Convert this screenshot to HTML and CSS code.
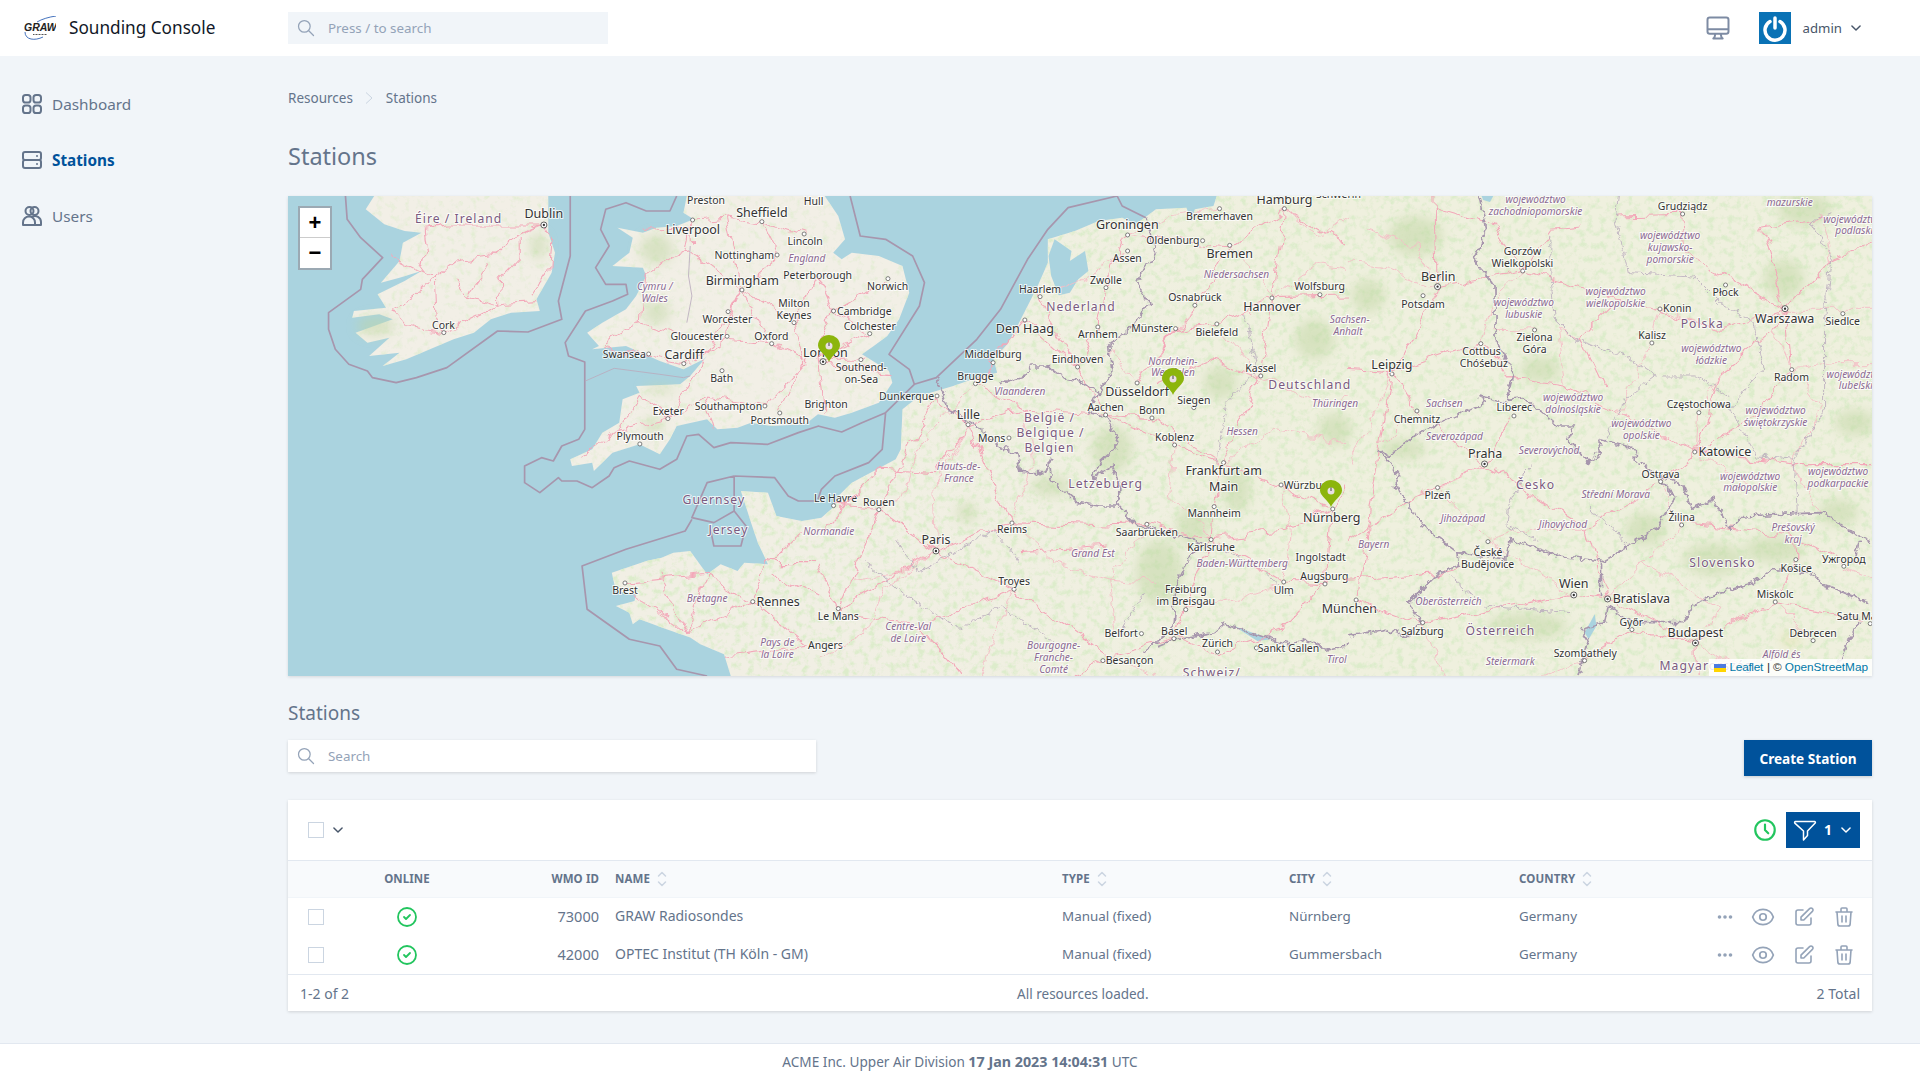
FILE: index.html
```html
<!DOCTYPE html>
<html lang="en">
<head>
<meta charset="utf-8">
<title>Sounding Console</title>
<link rel="stylesheet" href="styles.css">
</head>
<body>
<svg class="sprite" aria-hidden="true">
  <symbol id="i-search" viewBox="0 0 24 24"><path d="M21 21l-6-6m2-5a7 7 0 11-14 0 7 7 0 0114 0z"/></symbol>
  <symbol id="i-grid" viewBox="0 0 24 24"><rect x="3" y="3" width="7.500" height="7.500" rx="2.600"/><rect x="13.500" y="3" width="7.500" height="7.500" rx="2.600"/><rect x="3" y="13.500" width="7.500" height="7.500" rx="2.600"/><rect x="13.500" y="13.500" width="7.500" height="7.500" rx="2.600"/></symbol>
  <symbol id="i-server" viewBox="0 0 24 24"><path d="M5 12h14M5 12a2 2 0 01-2-2V6a2 2 0 012-2h14a2 2 0 012 2v4a2 2 0 01-2 2M5 12a2 2 0 00-2 2v4a2 2 0 002 2h14a2 2 0 002-2v-4a2 2 0 00-2-2m-2-4h.01M17 16h.01"/></symbol>
  <symbol id="i-users" viewBox="0 0 24 24"><circle cx="9.500" cy="7" r="4"/><circle cx="14.500" cy="7" r="4"/><path d="M3 21v-2.500a6 6 0 0112 0V21zM12 12.800a6 6 0 019 5.200V21h-6"/></symbol>
  <symbol id="i-desktop" viewBox="0 0 24 24"><path d="M9.750 17L9 20l-1 1h8l-1-1-.75-3M3 13h18M5 17h14a2 2 0 002-2V5a2 2 0 00-2-2H5a2 2 0 00-2 2v10a2 2 0 002 2z"/></symbol>
  <symbol id="i-down" viewBox="0 0 24 24"><path d="M5 8.500l7 7 7-7"/></symbol>
  <symbol id="i-check" viewBox="0 0 24 24"><path d="M9 12l2 2 4-4m6 2a9 9 0 11-18 0 9 9 0 0118 0z"/></symbol>
  <symbol id="i-clock" viewBox="0 0 24 24"><path d="M12 7v5l3 3m6-3a9 9 0 11-18 0 9 9 0 0118 0z"/></symbol>
  <symbol id="i-filter" viewBox="0 0 24 24"><path d="M2.500 3.500h19a1 1 0 01.7 1.600L14.500 13v4.500l-4 4.500V13L1.800 5.100a1 1 0 01.7-1.600z"/></symbol>
  <symbol id="i-sort" viewBox="0 0 12 20"><path d="M2.500 7L6 3.500 9.500 7M2.500 13L6 16.500 9.500 13"/></symbol>
  <symbol id="i-eye" viewBox="0 0 24 24"><path d="M15 12a3 3 0 11-6 0 3 3 0 016 0z"/><path d="M2.458 12C3.732 7.943 7.523 5 12 5c4.478 0 8.268 2.943 9.542 7-1.274 4.057-5.064 7-9.542 7-4.477 0-8.268-2.943-9.542-7z"/></symbol>
  <symbol id="i-edit" viewBox="0 0 24 24"><path d="M11 5H6a2 2 0 00-2 2v11a2 2 0 002 2h11a2 2 0 002-2v-5m-1.414-9.414a2 2 0 112.828 2.828L11.828 15H9v-2.828l8.586-8.586z"/></symbol>
  <symbol id="i-trash" viewBox="0 0 24 24"><path d="M19 7l-.867 12.142A2 2 0 0116.138 21H7.862a2 2 0 01-1.995-1.858L5 7m5 4v6m4-6v6m1-10V4a1 1 0 00-1-1h-4a1 1 0 00-1 1v3M4 7h16"/></symbol>
  <symbol id="i-dots" viewBox="0 0 16 6"><circle cx="2.500" cy="3" r="1.800"/><circle cx="8" cy="3" r="1.800"/><circle cx="13.500" cy="3" r="1.800"/></symbol>
</svg>

<header class="topbar">
  <div class="brand">
    <svg class="logo" viewBox="0 0 32 24">
      <path class="logo-arc" d="M13 6C18 3 25 1 32 0M1 16c0 8 10 9 18 5"/>
      <path class="logo-sub" d="M9 18.500h14"/>
      <text class="logo-text" x="0" y="15">GRAW</text>
    </svg>
    <span class="brand-name">Sounding Console</span>
  </div>
  <div class="searchbox top-search">
    <svg class="ico ico-search"><use href="#i-search"/></svg>
    <input class="search-input" placeholder="Press / to search">
  </div>
  <div class="top-right">
    <svg class="ico ico-desktop"><use href="#i-desktop"/></svg>
    <div class="avatar">
      <svg class="power" viewBox="0 0 32 32"><path d="M11 9.500a10 10 0 1010 0"/><path d="M16 6v10"/></svg>
    </div>
    <span class="user">admin</span>
    <svg class="ico ico-chev"><use href="#i-down"/></svg>
  </div>
</header>

<div class="shell">
  <nav class="sidebar">
    <a class="nav"><svg class="ico nav-ico"><use href="#i-grid"/></svg>Dashboard</a>
    <a class="nav active"><svg class="ico nav-ico"><use href="#i-server"/></svg>Stations</a>
    <a class="nav"><svg class="ico nav-ico"><use href="#i-users"/></svg>Users</a>
  </nav>

  <main class="main">
    <div class="crumbs">
      <span>Resources</span>
      <svg class="crumb-sep" viewBox="0 0 10 14"><path d="M2 1.500L8 7l-6 5.500"/></svg>
      <span>Stations</span>
    </div>
    <h1 class="page-title">Stations</h1>

    <section class="map">
      <svg class="map-svg" viewBox="0 0 1584 480">
        <defs>
          <linearGradient id="landwash" gradientUnits="userSpaceOnUse" x1="1600" y1="0" x2="3000" y2="0">
            <stop offset="0" stop-color="#f1efe4"/>
            <stop offset="1" stop-color="#eff0de"/>
          </linearGradient>
          <filter id="mottle" x="0" y="0" width="1" height="1">
            <feTurbulence type="fractalNoise" baseFrequency=".05" numOctaves="5" seed="7"/>
            <feColorMatrix values="0 0 0 0 .72  0 0 0 0 .84  0 0 0 0 .6  0 0 0 3.500 -1.650"/>
            <feComposite in2="SourceAlpha" operator="in" result="woods"/>
            <feMerge><feMergeNode in="SourceGraphic"/><feMergeNode in="woods"/></feMerge>
          </filter>
          <filter id="mottle-lt" x="0" y="0" width="1" height="1">
            <feTurbulence type="fractalNoise" baseFrequency=".05" numOctaves="5" seed="21"/>
            <feColorMatrix values="0 0 0 0 .74  0 0 0 0 .84  0 0 0 0 .62  0 0 0 2.500 -1.300"/>
            <feComposite in2="SourceAlpha" operator="in" result="woods"/>
            <feMerge><feMergeNode in="SourceGraphic"/><feMergeNode in="woods"/></feMerge>
          </filter>
          <filter id="soft" x="-50%" y="-50%" width="200%" height="200%"><feGaussianBlur stdDeviation="18"/></filter>
          <filter id="wiggle" filterUnits="userSpaceOnUse" x="-100" y="-100" width="3400" height="1700">
            <feTurbulence type="fractalNoise" baseFrequency=".018" numOctaves="3" seed="3"/>
            <feDisplacementMap in="SourceGraphic" scale="46" xChannelSelector="R" yChannelSelector="G"/>
          </filter>
          <filter id="jag" filterUnits="userSpaceOnUse" x="-100" y="-100" width="3400" height="1700">
            <feTurbulence type="fractalNoise" baseFrequency=".045" numOctaves="3" seed="11"/>
            <feDisplacementMap in="SourceGraphic" scale="26" xChannelSelector="R" yChannelSelector="G"/>
          </filter>
        </defs>
        <rect class="sea" width="1584" height="480"/>

        <g transform="scale(.338 .3333)">
          <path class="land land-isle" d="M255,0 230,40 285,85 345,105 395,110 340,140 330,195 275,260 330,245 395,225 345,255 265,295 290,335 195,345 190,365 270,355 310,370 200,410 235,440 300,425 240,480 330,470 280,510 350,490 490,430 550,410 600,370 660,350 745,345 735,310 780,230 790,170 770,110 770,0Z"/>
          <path class="land land-isle" d="M1180,0 1170,50 1200,70 1150,90 1090,95 1050,110 975,95 1020,125 1010,170 960,210 1050,215 1060,240 1030,300 1000,340 930,380 885,410 920,450 900,460 1000,450 1100,495 1170,520 1230,490 1240,480 1190,540 1160,565 1030,570 1040,590 990,610 980,680 930,710 900,760 835,790 840,810 900,800 905,825 960,770 1040,745 1100,775 1130,730 1150,690 1240,670 1270,700 1330,695 1370,680 1430,690 1530,685 1568,655 1618,665 1668,650 1748,620 1788,560 1778,525 1698,475 1733,450 1773,420 1808,370 1838,290 1818,210 1748,180 1668,170 1638,190 1613,170 1648,130 1628,60 1588,0Z"/>
          <path class="land land-main" d="M1310,1440 1290,1375 1220,1345 1190,1325 1120,1300 1040,1270 1020,1285 1010,1250 970,1230 1025,1215 1030,1195 970,1185 958,1130 1060,1095 1105,1085 1140,1070 1190,1065 1240,1135 1280,1105 1330,1125 1350,1100 1420,1105 1390,1040 1370,980 1340,885 1420,890 1445,960 1520,975 1578,965 1618,930 1628,900 1668,860 1798,790 1813,760 1818,640 1868,600 1968,570 2038,545 2098,530 2088,490 2128,445 2158,390 2188,330 2218,270 2248,200 2248,130 2328,105 2398,75 2468,65 2508,85 2568,40 2658,35 2673,75 2683,40 2738,30 2748,0H4800V1440Z"/>
          <g class="wood" filter="url(#soft)">
            <ellipse cx="1090" cy="160" rx="50" ry="45"/><ellipse cx="1090" cy="350" rx="40" ry="35"/><ellipse cx="740" cy="150" rx="25" ry="40"/><ellipse cx="260" cy="390" rx="55" ry="30"/><ellipse cx="1080" cy="690" rx="30" ry="24"/><ellipse cx="1100" cy="580" rx="50" ry="12"/>
          </g>
          <g class="rd" filter="url(#wiggle)">
            <path d="M400,100 410,170 395,230 430,250 500,195 600,180 640,140 755,90M430,250 435,360 460,410M530,300 600,200M470,90 410,95M630,330 625,250 690,180 690,125M720,300 775,220 780,140 755,90M315,340 430,250M310,340 350,390 460,410 640,325 740,320M400,100 470,90 755,90M300,180 395,230M490,250 530,300 630,330"/>
            <path d="M1197,70 1300,60 1340,280 1430,440 1530,490M1340,280 1240,480 1170,500 930,450M1430,440 1300,430 1240,480 1125,665 980,700 860,790M1125,665 1240,600 1410,630 1540,490M1340,280 1500,380 1530,490M1300,60 1400,75 1525,115M1450,180 1340,280M1200,140 1195,70M1050,100 1200,95M1530,490 1455,650M1340,280 1310,350 1300,430M1180,160 1340,280M1060,230 1180,160M1045,380 1170,420M1060,230 1045,380M930,450 1045,380M1197,72 1180,160M1400,75 1450,180M1500,380 1568,240M980,700 1040,600 1125,665M1240,600 1270,700"/>
            <path d="M1000,1160 1240,1135 1375,1215M1010,1190 1180,1310 1375,1215 1420,1100 1570,1100M1375,1215 1530,1345 1290,1375M1440,1140 1560,1200M1520,1010 1430,1100M1100,1130 1180,1310M1240,1135 1180,1310"/>
          </g>
          <g class="bd">
            <path d="M170,0 175,70 215,125 280,185 220,250 215,280 120,350 120,400 140,460 180,505 235,525 250,545 320,560 380,545 470,515 620,405 710,408 810,370 800,315 835,180 835,0"/>
            <path d="M1150,0 1130,45 1060,45 1000,20 940,40 925,100 950,150 910,215 940,265 1000,265 1005,295 960,315 880,345 820,440 830,480 878,498 878,700 860,730 810,750 785,795 750,785 700,810 700,860 745,890 800,845 810,855 855,855 900,875 950,840 965,815 1010,795 1100,820 1150,790 1180,720 1215,715 1260,755 1310,740 1420,745 1510,710 1570,690"/>
            <path d="M1195,970 1175,1005 1000,1060 870,1110 885,1240 1010,1330 1100,1350 1150,1420 1240,1440M1320,840 1240,860 1195,965 1260,980 1320,945 1355,990 1340,1050 1260,1050 1250,1000M1320,840V945M1320,840 1440,845 1480,900 1510,915 1568,915"/>
            <path class="thin" d="M880,555 965,517 1100,535 1170,545 1190,540"/>
            <path class="thin" d="M1190,150 1185,240 1195,300 1180,380"/>
          </g>
          <g class="cities">
            <circle class="cap" cx="757" cy="87"/><circle class="cap-dot" cx="757" cy="87"/><circle cx="461" cy="410"/><circle cx="1197" cy="72"/><circle cx="1402" cy="77"/><circle cx="1343" cy="282"/><circle cx="1447" cy="177"/><circle cx="1527" cy="114"/><circle cx="1302" cy="347"/><circle cx="1299" cy="421"/><circle cx="1431" cy="443"/><circle cx="1067" cy="474"/><circle cx="1171" cy="503"/><circle cx="1284" cy="524"/><circle cx="1124" cy="668"/><circle cx="1041" cy="744"/><circle cx="1411" cy="630"/><circle cx="1455" cy="651"/><circle cx="1497" cy="380"/><circle cx="997" cy="1161"/><circle cx="1375" cy="1217"/>
          </g>
          <g class="lbl">
            <text class="n" x="505" y="82">Éire / Ireland</text><text class="b" x="757" y="67">Dublin</text><text x="460" y="400">Cork</text><text x="1237" y="24">Preston</text><text class="b" x="1402" y="62">Sheffield</text><text class="b" x="1198" y="115">Liverpool</text><text x="1350" y="188">Nottingham</text><text x="1530" y="146">Lincoln</text><text class="r" x="1535" y="197">England</text><text x="1555" y="27">Hull</text><text class="b" x="1344" y="267">Birmingham</text><text x="1567" y="250">Peterborough</text><text class="r" x="1085" y="283">Cymru /</text><text class="r" x="1085" y="318">Wales</text><text x="1497" y="333">Milton</text><text x="1497" y="369">Keynes</text><text x="1300" y="380">Worcester</text><text x="1210" y="431">Gloucester</text><text x="1430" y="432">Oxford</text><text class="b" x="1590" y="482">London</text><text x="995" y="485">Swansea</text><text class="b" x="1172" y="488">Cardiff</text><text x="1283" y="559">Bath</text><text x="1303" y="642">Southampton</text><text x="1592" y="636">Brighton</text><text x="1125" y="657">Exeter</text><text x="1455" y="685">Portsmouth</text><text x="1042" y="733">Plymouth</text><text class="n" x="1260" y="925">Guernsey</text><text class="n" x="1303" y="1015">Jersey</text><text x="997" y="1193">Brest</text><text class="r" x="1240" y="1217">Bretagne</text><text class="b" x="1450" y="1229">Rennes</text><text class="r" x="1448" y="1350">Pays de</text><text class="r" x="1448" y="1385">la Loire</text><text class="r" x="1600" y="1017">Normandie</text><text x="1590" y="1360">Angers</text><text x="1620" y="918">Le Havre</text>
          </g>
        </g>

        <g transform="translate(530 0) scale(.338 .3333)">
          <path class="sea" d="M700,130 750,165 745,195 790,165 800,225 770,250 745,290 712,298 690,240 682,180Z"/>
          <path class="sea" d="M1230,1290 1340,1330 1300,1335Z"/>
          <g class="wood" filter="url(#soft)">
            <ellipse cx="870" cy="760" rx="60" ry="70"/><ellipse cx="1010" cy="1130" rx="70" ry="100"/><ellipse cx="1110" cy="990" rx="50" ry="60"/><ellipse cx="690" cy="870" rx="60" ry="30"/><ellipse cx="1470" cy="430" rx="60" ry="60"/><ellipse cx="1240" cy="880" rx="40" ry="70"/><ellipse cx="1190" cy="560" rx="50" ry="50"/><ellipse cx="1530" cy="700" rx="50" ry="50"/><ellipse cx="440" cy="950" rx="30" ry="30"/>
          </g>
          <g class="rd" filter="url(#wiggle)">
            <path d="M0,490 130,490M0,480 45,345 205,250M45,345 150,410 0,480M0,480 20,650M15,500 220,530M46,345 0,240"/>
            <path d="M349,1065 180,940M349,1065 574,980M574,980 445,690M349,1065 60,1240M349,1065 580,1180 860,1380 1054,1330M574,980 860,990 973,985 1163,1030 1380,1155 1498,1160M445,690 350,600M445,690 610,640 851,655 988,665 1200,800 1170,930 1163,1030 1054,1320 1180,1370M851,655 768,510 650,300M768,510 612,370M944,560 1118,330 1218,150 1380,40M944,560 1060,400 1180,385 1343,305 1380,40M1343,305 1310,540 1200,800 1370,870 1520,940 1500,1160M851,655 1055,745 1200,800M916,118 850,275 828,395 768,510M916,118 1218,150M612,370 466,560 610,640M1500,1160 1370,1300 1180,1370M180,940 46,930M180,940 60,1240M60,1240 0,1100M1000,560 1160,490 1310,540M350,600 180,940M1163,1030 1380,1000 1520,940M600,1070 860,1050M20,1000 180,820 350,830 445,690M60,1240 300,1290 580,1180M300,1290 420,1440M860,1380 760,1440M1343,305 1568,300M1380,40 1568,150M1520,940 1568,870"/>
            <path class="mn" d="M650,300 780,250 916,165M1118,330 1058,398 944,560M1180,385 1310,540M1310,540 1480,620 1568,600M1055,745 1040,900 1163,1030M1200,800 1340,700 1568,740M1370,870 1400,1000 1380,1155M973,985 860,1150 880,1310M574,980 700,1100 860,1150 1000,1160M445,690 340,880 349,1065M349,1065 200,1180 150,1300 0,1380M580,1180 520,1300 480,1440M860,1380 1000,1440M1088,1241 1250,1200 1378,1158M1343,305 1480,200 1568,220M1218,150 1300,240 1343,305M768,510 870,470 944,560M466,563 300,740 250,900 180,940M610,640 640,800 574,980M100,1150 250,1130 349,1065M1380,40 1490,120 1568,60M916,118 1040,60 1188,38"/>
          </g>
          <g class="bd" filter="url(#jag)">
            <path d="M350,545 385,640 470,690 530,750 590,770 600,830 670,830 685,790 690,850 770,920 830,930 890,930 940,985 1060,1020 1140,1040 1090,1100 1060,1160 1050,1300 1000,1340 960,1370M1000,1350 1050,1330 1170,1310 1200,1285 1340,1330 1400,1345 1440,1330 1500,1360 1568,1350"/>
            <path d="M540,560 610,540 630,510 680,510 730,545 790,560 830,590 800,650 850,660 880,720 890,745 840,790 810,850 870,810 890,860 890,930M970,65 1000,170 940,260 980,320 940,380 890,425 860,450 870,530 830,590"/>
            <path class="thin" d="M1140,1040 1300,1110 1400,1200M1260,350 1300,520 1210,620 1180,800M230,1030 300,1130 520,1000 600,1100M140,1100 260,1200 420,1300 540,1230 700,1340M960,1200 900,1300"/>
          </g>
          <g class="bd">
            <path d="M95,0 125,120 200,130 280,180 315,260 300,330 210,475 270,520 285,565 200,650 190,760 150,800 50,840 10,880 0,910M0,690 70,708 130,680 200,650M285,565 350,545 470,430 540,340 620,190 680,100 740,35 885,0 900,30 970,65"/>
          </g>
          <g class="cities">
            <circle class="cap" cx="15" cy="497"/><circle class="cap-dot" cx="15" cy="497"/><circle cx="127" cy="491"/><circle cx="46" cy="345"/><circle cx="207" cy="248"/><circle cx="153" cy="413"/><circle cx="352" cy="600"/><circle cx="466" cy="563"/><circle cx="444" cy="686"/><circle cx="565" cy="726"/><circle cx="518" cy="500"/><circle cx="612" cy="372"/><circle cx="657" cy="302"/><circle cx="768" cy="513"/><circle cx="828" cy="393"/><circle cx="852" cy="275"/><circle cx="916" cy="165"/><circle cx="916" cy="117"/><circle cx="1138" cy="134"/><circle cx="1218" cy="148"/><circle cx="1380" cy="38"/><circle cx="1188" cy="38"/><circle cx="1115" cy="328"/><circle cx="1058" cy="398"/><circle cx="1180" cy="384"/><circle cx="1343" cy="306"/><circle cx="1485" cy="296"/><circle cx="944" cy="561"/><circle cx="1310" cy="540"/><circle cx="851" cy="657"/><circle cx="988" cy="666"/><circle cx="1112" cy="635"/><circle cx="1055" cy="747"/><circle cx="1200" cy="800"/><circle cx="1370" cy="867"/><circle cx="1523" cy="939"/><circle cx="1172" cy="932"/><circle cx="1163" cy="1031"/><circle cx="973" cy="985"/><circle cx="574" cy="981"/><circle class="cap" cx="349" cy="1065"/><circle class="cap-dot" cx="349" cy="1065"/><circle cx="180" cy="941"/><circle cx="46" cy="929"/><circle cx="580" cy="1180"/><circle cx="60" cy="1238"/><circle cx="1378" cy="1158"/><circle cx="1500" cy="1164"/><circle cx="1088" cy="1241"/><circle cx="1053" cy="1328"/><circle cx="957" cy="1313"/><circle cx="843" cy="1394"/><circle cx="1182" cy="1368"/><circle cx="1297" cy="1356"/>
          </g>
          <g class="lbl">
            <text class="b" x="1380" y="24">Hamburg</text><text x="1540" y="5">Schwerin</text><text x="1188" y="72">Bremerhaven</text><text class="b" x="915" y="98">Groningen</text><text x="1050" y="144">Oldenburg</text><text class="b" x="1218" y="187">Bremen</text><text x="915" y="199">Assen</text><text class="r" x="1238" y="247">Niedersachsen</text><text x="852" y="263">Zwolle</text><text x="1484" y="283">Wolfsburg</text><text x="657" y="291">Haarlem</text><text x="1115" y="316">Osnabrück</text><text class="b" x="1343" y="345">Hannover</text><text class="n" x="778" y="346">Nederland</text><text x="137" y="356">Cambridge</text><text x="206" y="281">Norwich</text><text x="153" y="402">Colchester</text><text class="b" x="612" y="412">Den Haag</text><text x="828" y="426">Arnhem</text><text x="988" y="409">Münster</text><text x="1180" y="420">Bielefeld</text><text x="518" y="487">Middelburg</text><text x="768" y="500">Eindhoven</text><text class="r" x="1050" y="506">Nordrhein-</text><text class="r" x="1050" y="541">Westfalen</text><text x="1310" y="527">Kassel</text><text x="128" y="526">Southend-</text><text x="128" y="562">on-Sea</text><text x="466" y="551">Brugge</text><text class="n" x="1455" y="580">Deutschland</text><text class="r" x="597" y="598">Vlaanderen</text><text class="b" x="944" y="600">Düsseldorf</text><text x="262" y="613">Dunkerque</text><text x="1112" y="623">Siegen</text><text class="r" x="1530" y="633">Thüringen</text><text x="851" y="644">Aachen</text><text x="988" y="654">Bonn</text><text class="n" x="685" y="678">België /</text><text class="b" x="445" y="670">Lille</text><text class="n" x="688" y="724">Belgique /</text><text x="514" y="737">Mons</text><text x="1055" y="735">Koblenz</text><text class="r" x="1255" y="718">Hessen</text><text class="n" x="685" y="769">Belgien</text><text class="r" x="416" y="822">Hauts-de-</text><text class="r" x="417" y="857">France</text><text class="b" x="1200" y="838">Frankfurt am</text><text class="b" x="1200" y="885">Main</text><text class="n" x="851" y="875">Letzebuerg</text><text x="1450" y="878">Würzburg</text><text x="180" y="929">Rouen</text><text x="1172" y="964">Mannheim</text><text class="b" x="1520" y="979">Nürnberg</text><text x="574" y="1012">Reims</text><text x="973" y="1020">Saarbrücken</text><text x="1163" y="1065">Karlsruhe</text><text class="b" x="349" y="1044">Paris</text><text class="r" x="813" y="1083">Grand Est</text><text class="r" x="1255" y="1112">Baden-Württemberg</text><text x="1487" y="1094">Ingolstadt</text><text x="1498" y="1152">Augsburg</text><text x="580" y="1167">Troyes</text><text x="1088" y="1192">Freiburg</text><text x="1088" y="1228">im Breisgau</text><text x="1378" y="1193">Ulm</text><text x="60" y="1271">Le Mans</text><text class="b" x="1572" y="1252">München</text><text class="r" x="267" y="1302">Centre-Val</text><text class="r" x="267" y="1337">de Loire</text><text x="897" y="1323">Belfort</text><text x="1054" y="1316">Basel</text><text x="1182" y="1354">Zürich</text><text x="1392" y="1367">Sankt Gallen</text><text class="r" x="697" y="1360">Bourgogne-</text><text class="r" x="697" y="1395">Franche-</text><text class="r" x="697" y="1430">Comté</text><text x="922" y="1405">Besançon</text><text class="n" x="1165" y="1442">Schweiz/</text><text class="r" x="1535" y="1400">Tirol</text>
          </g>
        </g>

        <g transform="translate(1060 0) scale(.338 .3333)">
          <g class="wood" filter="url(#soft)">
            <ellipse cx="200" cy="120" rx="80" ry="60"/><ellipse cx="60" cy="300" rx="50" ry="50"/><ellipse cx="570" cy="520" rx="60" ry="40"/><ellipse cx="1350" cy="40" rx="80" ry="50"/><ellipse cx="1080" cy="1090" rx="90" ry="50"/><ellipse cx="1260" cy="1060" rx="90" ry="40"/><ellipse cx="530" cy="1290" rx="120" ry="40"/><ellipse cx="160" cy="760" rx="70" ry="30"/><ellipse cx="1450" cy="950" rx="60" ry="40"/><ellipse cx="1500" cy="680" rx="60" ry="40"/><ellipse cx="1290" cy="250" rx="60" ry="60"/><ellipse cx="880" cy="1000" rx="60" ry="50"/>
            <ellipse class="dry" cx="1310" cy="1330" rx="30" ry="25"/>
          </g>
          <path class="sea" d="M700,1310 730,1255 735,1290 712,1330Z"/>
          <path class="sea" d="M395,0H430L420,18 400,12Z"/>
          <g class="rd" filter="url(#wiggle)">
            <path d="M267,275 520,225 800,310 1100,400 1293,340M267,275 130,530 30,1200M130,530 394,440 500,550 640,570 800,650 1030,770 1100,540 1260,400 1293,340M405,805 490,660M405,805 200,900 0,1040M405,805 710,1000 770,1210 668,1195 220,1280 30,1210M770,1210 1030,1340 1264,1220 1520,1270M1293,340 1430,190 1568,130M1030,770 1310,800 1568,800M925,860 1030,770M925,860 770,950 710,1000M985,985 1320,1020 1470,1100M1030,1340 840,1300M1290,340 1000,170 990,55M1290,340 1220,90 1400,60M267,275 260,0M520,225 600,100 700,90M130,530 0,520M130,530 200,650 405,805M520,225 430,90 260,40M1293,340 1310,520 1220,650 1030,770M990,55 800,60M1320,1020 1325,1090 1264,1220M1030,1340 1030,1440M700,1394 840,1300M0,1150 270,1130 330,1110M800,310 690,420 760,570"/>
            <path class="mn" d="M60,100 200,150 267,275M0,200 100,210 267,275M130,530 60,700 0,800M200,650 90,760M394,440 440,300 520,225M552,402 430,400M640,570 620,400 690,420M800,650 900,441 923,339 1100,400M1030,770 1038,650 1100,540M1313,521 1400,640 1310,800M1313,521 1260,400M1310,800 1400,950M1190,880 1030,770M265,875 405,805M265,875 414,1037 668,1197M414,1037 540,1000 710,1000M987,987 925,860M987,987 870,1100 770,1210M1030,1340 1100,1240 1000,1180 870,1100M1325,1091 1264,1218M1376,1334 1264,1218M1568,500 1430,500 1313,521M1430,190 1400,60M1293,340 1568,340M700,1394 560,1440M220,1280 280,1440M1028,1341 1200,1440M1467,1111 1568,1150"/>
          </g>
          <g class="bd" filter="url(#jag)">
            <path d="M0,1320 110,1300 170,1320 215,1280 180,1220 270,1130 330,1110 325,1070 230,1000 140,870 150,840 90,760 120,780 210,710 340,650 400,620 390,600 440,610 470,620M390,0 410,100 370,190 435,270 435,430 490,530 470,610 520,605 620,690 670,690 650,730 710,800 750,770 740,730 850,760 850,790 900,830 990,870 1020,940 1080,910 1130,1000 1170,960 1400,950 1520,1025 1550,1040M900,830 970,900 910,1000 830,1050 750,1100 750,1200M325,1070 470,1090 480,1030 620,1080 750,1095M770,1230 760,1280 690,1300 710,1330 680,1440M770,1230 840,1280 990,1280 1030,1220 1100,1190 1200,1160 1250,1120 1370,1130 1400,1165 1540,1220M1510,1040 1500,1100M1510,1280 1450,1400"/>
            <path class="thin" d="M800,0 790,70 830,230 1020,240 1100,320 1200,380 1230,510 1130,640 1210,780 1320,790 1330,960M600,120 600,230 610,370 670,430 820,480 910,540 830,600 760,730M930,540 1030,540 1130,600M1430,50 1370,80 1430,180 1410,370 1410,640 1320,790M720,880 720,950 760,970 830,1050M300,1140 400,1230 660,1250M540,800 480,920 470,990 560,1030"/>
          </g>
          <g class="cities">
            <circle class="cap" cx="265" cy="272"/><circle class="cap-dot" cx="265" cy="272"/><circle cx="222" cy="299"/><circle cx="517" cy="225"/><circle cx="552" cy="402"/><circle cx="393" cy="443"/><circle cx="130" cy="534"/><circle cx="204" cy="645"/><circle cx="491" cy="660"/><circle class="cap" cx="404" cy="804"/><circle class="cap-dot" cx="404" cy="804"/><circle cx="265" cy="875"/><circle cx="414" cy="1037"/><circle class="cap" cx="668" cy="1197"/><circle class="cap-dot" cx="668" cy="1197"/><circle class="cap" cx="768" cy="1209"/><circle class="cap-dot" cx="768" cy="1209"/><circle cx="840" cy="1301"/><circle class="cap" cx="1028" cy="1341"/><circle class="cap-dot" cx="1028" cy="1341"/><circle class="cap" cx="1293" cy="338"/><circle class="cap-dot" cx="1293" cy="338"/><circle cx="1117" cy="267"/><circle cx="923" cy="339"/><circle cx="899" cy="441"/><circle cx="1313" cy="521"/><circle cx="1038" cy="650"/><circle cx="1026" cy="768"/><circle cx="925" cy="857"/><circle cx="987" cy="987"/><circle cx="990" cy="54"/><circle cx="1464" cy="353"/><circle cx="1325" cy="1091"/><circle cx="1264" cy="1218"/><circle cx="1467" cy="1111"/><circle cx="1376" cy="1334"/><circle cx="221" cy="1280"/><circle cx="24" cy="1212"/><circle cx="700" cy="1394"/><circle cx="1545" cy="1283"/>
          </g>
          <g class="lbl">
            <text class="r" x="555" y="22">województwo</text><text class="r" x="555" y="57">zachodniopomorskie</text><text x="990" y="41">Grudziądz</text><text class="r" x="1307" y="31">mazurskie</text><text class="r" x="1495" y="80">województwo</text><text class="r" x="1505" y="115">podlaskie</text><text x="516" y="177">Gorzów</text><text x="516" y="213">Wielkopolski</text><text class="r" x="953" y="129">województwo</text><text class="r" x="953" y="165">kujawsko-</text><text class="r" x="953" y="200">pomorskie</text><text class="b" x="267" y="255">Berlin</text><text x="222" y="335">Potsdam</text><text class="r" x="792" y="297">województwo</text><text class="r" x="792" y="332">wielkopolskie</text><text class="r" x="520" y="330">województwo</text><text class="r" x="520" y="365">lubuskie</text><text x="1117" y="300">Płock</text><text x="974" y="349">Konin</text><text class="b" x="1292" y="380">Warszawa</text><text x="1464" y="387">Siedlce</text><text class="n" x="1048" y="397">Polska</text><text class="r" x="5" y="382">Sachsen-</text><text class="r" x="0" y="418">Anhalt</text><text x="552" y="436">Zielona</text><text x="552" y="472">Góra</text><text x="900" y="430">Kalisz</text><text x="395" y="478">Cottbus</text><text x="402" y="513">Chóśebuz</text><text class="b" x="130" y="520">Leipzig</text><text class="r" x="1075" y="469">województwo</text><text class="r" x="1075" y="504">łódzkie</text><text class="r" x="1505" y="545">województwo</text><text class="r" x="1510" y="580">lubelskie</text><text x="1312" y="556">Radom</text><text class="r" x="666" y="614">województwo</text><text class="r" x="666" y="650">dolnośląskie</text><text class="r" x="285" y="634">Sachsen</text><text x="492" y="646">Liberec</text><text x="1038" y="637">Częstochowa</text><text class="r" x="1265" y="655">województwo</text><text class="r" x="1265" y="691">świętokrzyskie</text><text x="204" y="680">Chemnitz</text><text class="r" x="868" y="694">województwo</text><text class="r" x="868" y="730">opolskie</text><text class="r" x="315" y="733">Severozápad</text><text class="r" x="595" y="773">Severovýchod</text><text class="b" x="406" y="785">Praha</text><text class="b" x="1115" y="779">Katowice</text><text x="925" y="846">Ostrava</text><text class="r" x="1190" y="851">województwo</text><text class="r" x="1190" y="886">małopolskie</text><text class="r" x="1450" y="837">województwo</text><text class="r" x="1450" y="872">podkarpackie</text><text class="n" x="555" y="880">Česko</text><text x="265" y="910">Plzeň</text><text class="r" x="792" y="907">Střední Morava</text><text x="987" y="974">Žilina</text><text class="r" x="340" y="977">Jihozápad</text><text class="r" x="636" y="997">Jihovýchod</text><text class="r" x="1317" y="1006">Prešovský</text><text class="r" x="1317" y="1042">kraj</text><text class="r" x="76" y="1057">Bayern</text><text x="414" y="1079">České</text><text x="413" y="1115">Budějovice</text><text x="1467" y="1100">Ужгород</text><text class="n" x="1108" y="1114">Slovensko</text><text x="1326" y="1127">Košice</text><text class="b" x="668" y="1177">Wien</text><text x="1264" y="1206">Miskolc</text><text class="b" x="868" y="1220">Bratislava</text><text class="r" x="297" y="1226">Oberösterreich</text><text x="220" y="1316">Salzburg</text><text class="n" x="451" y="1317">Österreich</text><text x="838" y="1291">Győr</text><text class="b" x="1028" y="1322">Budapest</text><text x="1376" y="1322">Debrecen</text><text x="1520" y="1271">Satu Mare</text><text x="702" y="1384">Szombathely</text><text class="r" x="1283" y="1385">Alföld és</text><text class="r" x="480" y="1407">Steiermark</text><text class="n" x="1060" y="1422">Magyarország</text>
          </g>
        </g>

        <defs>
          <g id="pin">
            <path class="pin-body" d="M11 27C9 21 0 16 0 10.500a11 10.500 0 0122 0C22 16 13 21 11 27z"/>
            <circle class="pin-eye" cx="11" cy="11" r="3.500"/>
            <path class="pin-tick" d="M11 11V7.500"/>
          </g>
        </defs>
        <g class="pins">
          <g transform="translate(530 139)"><use href="#pin"/></g>
          <g transform="translate(874 172)"><use href="#pin"/></g>
          <g transform="translate(1032 284)"><use href="#pin"/></g>
        </g>
      </svg>

      <div class="zoomctl">
        <div class="zoombtn zoombtn-in">+</div>
        <div class="zoombtn">−</div>
      </div>
      <div class="attrib">
        <svg class="flag" viewBox="0 0 12 8"><rect class="flag-b" width="12" height="4"/><rect class="flag-y" y="4" width="12" height="4"/></svg>
        <a class="attrib-link attrib-leaf">Leaflet</a><span class="attrib-sep">|</span><span>©</span><a class="attrib-link">OpenStreetMap</a>
      </div>
    </section>

    <h2 class="sub-title">Stations</h2>
    <div class="actions-row">
      <div class="searchbox list-search">
        <svg class="ico ico-search"><use href="#i-search"/></svg>
        <input class="search-input" placeholder="Search">
      </div>
      <button class="btn-create">Create Station</button>
    </div>

    <section class="card">
      <div class="toolbar">
        <span class="check"></span>
        <svg class="ico ico-tool-chev"><use href="#i-down"/></svg>
        <svg class="ico ico-clock"><use href="#i-clock"/></svg>
        <div class="filter-btn">
          <svg class="ico ico-filter"><use href="#i-filter"/></svg>
          <span>1</span>
          <svg class="ico ico-filter-chev"><use href="#i-down"/></svg>
        </div>
      </div>
      <div class="row head">
        <span></span>
        <span class="center">Online</span>
        <span class="right">WMO ID</span>
        <span class="col-name sortable">Name<svg class="sort"><use href="#i-sort"/></svg></span>
        <span class="sortable">Type<svg class="sort"><use href="#i-sort"/></svg></span>
        <span class="sortable">City<svg class="sort"><use href="#i-sort"/></svg></span>
        <span class="sortable">Country<svg class="sort"><use href="#i-sort"/></svg></span>
        <span></span>
      </div>
      <div class="row">
        <span><span class="check"></span></span>
        <span class="center"><svg class="ico ico-ok"><use href="#i-check"/></svg></span>
        <span class="right num cell">73000</span>
        <span class="col-name cell">GRAW Radiosondes</span>
        <span class="cell">Manual (fixed)</span>
        <span class="cell">Nürnberg</span>
        <span class="cell">Germany</span>
        <span class="row-actions">
          <svg class="dots"><use href="#i-dots"/></svg>
          <svg class="ico act act-eye"><use href="#i-eye"/></svg>
          <svg class="ico act"><use href="#i-edit"/></svg>
          <svg class="ico act"><use href="#i-trash"/></svg>
        </span>
      </div>
      <div class="row">
        <span><span class="check"></span></span>
        <span class="center"><svg class="ico ico-ok"><use href="#i-check"/></svg></span>
        <span class="right num cell">42000</span>
        <span class="col-name cell">OPTEC Institut (TH Köln - GM)</span>
        <span class="cell">Manual (fixed)</span>
        <span class="cell">Gummersbach</span>
        <span class="cell">Germany</span>
        <span class="row-actions">
          <svg class="dots"><use href="#i-dots"/></svg>
          <svg class="ico act act-eye"><use href="#i-eye"/></svg>
          <svg class="ico act"><use href="#i-edit"/></svg>
          <svg class="ico act"><use href="#i-trash"/></svg>
        </span>
      </div>
      <div class="card-foot">
        <span>1-2 of 2</span>
        <span class="foot-mid">All resources loaded.</span>
        <span>2 Total</span>
      </div>
    </section>
  </main>
</div>

<footer class="foot">ACME Inc. Upper Air Division <b>17 Jan 2023 14:04:31</b> UTC</footer>
</body>
</html>
```

FILE: styles.css
```css
* { box-sizing: border-box; }
html, body { margin: 0; height: 100%; }
body {
  display: flex;
  flex-direction: column;
  height: 100vh;
  overflow: hidden;
  background: #f1f5f9;
  color: #64748b;
  font: 14px/20px "Noto Sans", "Open Sans", sans-serif;
}
.sprite { display: none; }
.ico { fill: none; stroke: currentColor; stroke-width: 2; stroke-linecap: round; stroke-linejoin: round; flex: none; }

/* top bar */
.topbar { flex: none; height: 56px; background: #fff; display: flex; align-items: center; }
.brand { width: 288px; display: flex; align-items: center; padding-left: 24px; gap: 13px; }
.logo { width: 32px; height: 24px; flex: none; }
.logo-arc { fill: none; stroke: #2f62b5; stroke-width: .9; }
.logo-sub { fill: none; stroke: #555; stroke-width: 1; stroke-dasharray: 1 .5; }
.logo-text { font: italic 700 10.500px "Liberation Sans", sans-serif; fill: #222; }
.brand-name { font-size: 17.200px; color: #111827; white-space: nowrap; }
.searchbox { display: flex; align-items: center; height: 32px; color: #94a3b8; }
.top-search { width: 320px; background: #f1f5f9; }
.ico-search { width: 20px; height: 20px; margin-left: 8px; stroke-width: 1.500; }
.search-input { flex: 1; min-width: 0; border: 0; background: transparent; outline: 0; padding: 0 0 0 12px; font: 13.400px "Noto Sans", sans-serif; color: #475569; }
.search-input::placeholder { color: #94a3b8; opacity: 1; }
.top-right { margin-left: auto; display: flex; align-items: center; padding-right: 57px; color: #475569; }
.ico-desktop { width: 28px; height: 28px; color: #7d8ba3; stroke-width: 1.700; }
.avatar { width: 32px; height: 32px; margin-left: 27px; background: #0a72b5; }
.power { display: block; width: 32px; height: 32px; fill: none; stroke: #fff; stroke-width: 3.500; stroke-linecap: round; }
.user { margin-left: 12px; font-size: 13.200px; }
.ico-chev { width: 14px; height: 14px; margin-left: 7px; stroke-width: 2.500; }

/* layout */
.shell { flex: 1; display: flex; min-height: 0; }
.sidebar { width: 288px; flex: none; padding-top: 20px; }
.nav { display: flex; align-items: center; gap: 8px; height: 56px; padding-left: 20px; font-size: 15.300px; color: #64748b; }
.nav.active { color: #00529b; font-weight: 700; }
.nav-ico { width: 24px; height: 24px; color: #64748b; stroke-width: 2; }
.main { flex: 1; min-width: 0; padding: 32px 48px 0 0; }

.crumbs { display: flex; align-items: center; height: 20px; font-size: 13.500px; color: #64748b; }
.crumb-sep { width: 10px; height: 14px; margin: 0 12px 0 11px; fill: none; stroke: #cbd5e1; }
.page-title { margin: 32px 0 24px; font-size: 23.500px; line-height: 32px; font-weight: 400; color: #64748b; }
.sub-title { margin: 23px 0 13px; font-size: 19px; line-height: 28px; font-weight: 400; color: #64748b; }

/* map */
.map { position: relative; height: 480px; overflow: hidden; background: #aad3df; box-shadow: 0 1px 3px rgba(0,0,0,.12); }
.map-svg { display: block; width: 1584px; height: 480px; }
.sea { fill: #aad3df; }
.land { fill: #f2efe6; }
.land-isle { filter: url(#mottle-lt); }
.land-main { fill: url(#landwash); filter: url(#mottle); }
.wood { fill: #bfd6a2; opacity: .5; }
.dry { fill: #dfe0a8; }
.rd path { fill: none; stroke: #f3a8b9; stroke-width: 3.200; stroke-linejoin: round; }
.rd .mn { stroke: #f5bcc6; stroke-width: 2.600; }
.bd path { fill: none; stroke: #a796ad; stroke-width: 5; stroke-linejoin: round; }
.bd .thin { stroke-width: 2.500; stroke: #b9abbd; }
.cities circle { r: 6px; fill: #fff; stroke: #666; stroke-width: 2.500; }
.cities .cap { r: 9px; fill: #fff; stroke: #444; stroke-width: 2.500; }
.cities .cap-dot { r: 3.500px; fill: #333; stroke: none; }
.lbl text {
  font: 31px "Noto Sans", sans-serif;
  fill: #333;
  text-anchor: middle;
  stroke: rgba(255,255,255,.75);
  stroke-width: 6px;
  paint-order: stroke;
}
.lbl .b { font-size: 37px; }
.lbl .r { font-size: 30px; font-style: italic; fill: #8b6a92; }
.lbl .n { font-size: 36px; letter-spacing: 3px; fill: #7a5a80; }
.pin-body { fill: #8cb50c; }
.pin-eye { fill: #e9dfe3; }
.pin-tick { fill: none; stroke: #444; stroke-width: 1; }

.zoomctl { position: absolute; left: 10px; top: 10px; width: 34px; border: 2px solid #9ba9b3; background: #fff; }
.zoombtn { height: 30px; text-align: center; font: 700 22px/30px "Liberation Sans", sans-serif; color: #000; }
.zoombtn-in { border-bottom: 1px solid #ccc; }
.attrib { position: absolute; right: 0; bottom: 0; height: 17px; padding: 0 4px 0 5px; display: flex; align-items: center; gap: 3px; background: rgba(255,255,255,.85); font: 11.800px/17px "Liberation Sans", sans-serif; color: #333; white-space: nowrap; }
.flag { width: 12px; height: 8px; margin-right: 1px; }
.flag-b { fill: #4c7be1; }
.flag-y { fill: #ffd500; }
.attrib-link { color: #0078a8; }
.attrib-leaf { letter-spacing: -.3px; }
.attrib-sep { margin-left: 1px; }

/* list */
.actions-row { display: flex; justify-content: space-between; align-items: flex-start; height: 36px; }
.list-search { width: 528px; background: #fff; box-shadow: 0 1px 3px rgba(0,0,0,.14); }
.btn-create { width: 128px; height: 36px; border: 0; background: #00529b; color: #fff; font: 700 13.600px "Noto Sans", sans-serif; box-shadow: 0 1px 3px rgba(0,0,0,.18); }

.card { margin-top: 24px; background: #fff; box-shadow: 0 1px 3px rgba(0,0,0,.14); }
.toolbar { height: 61px; display: flex; align-items: center; padding: 0 12px 0 20px; border-bottom: 1px solid #e2e8f0; }
.check { display: block; width: 16px; height: 16px; border: 1px solid #cbd5e1; background: #fff; }
.ico-tool-chev { width: 14px; height: 14px; margin-left: 7px; color: #475569; stroke-width: 2.500; }
.ico-clock { width: 26px; height: 26px; margin-left: auto; color: #22c55e; }
.filter-btn { width: 74px; height: 36px; margin-left: 8px; background: #00529b; color: #fff; display: flex; align-items: center; padding-left: 7px; font-weight: 700; font-size: 14px; }
.ico-filter { width: 24px; height: 24px; stroke-width: 1.500; }
.filter-btn span { margin-left: 7px; }
.ico-filter-chev { width: 14px; height: 14px; margin-left: 7px; stroke-width: 2.500; }

.row {
  display: grid;
  grid-template-columns: 82px 74px 155px 463px 227px 230px 190px 163px;
  align-items: center;
  height: 38px;
  color: #64748b;
  font-size: 13.400px;
  white-space: nowrap;
}
.row > span:first-child { padding-left: 20px; }
.cell { padding-bottom: 2px; }
.head { height: 37px; background: #f8fafc; border-bottom: 1px solid #f1f5f9; font-size: 11.500px; font-weight: 700; text-transform: uppercase; letter-spacing: .1px; }
.center { display: flex; justify-content: center; }
.right { text-align: right; }
.num { font-size: 14.500px; }
.col-name { padding-left: 16px; font-size: 14px; }
.head .col-name { font-size: 11.500px; }
.sortable { display: flex; align-items: center; }
.sort { width: 12px; height: 20px; margin-left: 6px; fill: none; stroke: #cbd5e1; stroke-width: 1.500; stroke-linecap: round; stroke-linejoin: round; }
.ico-ok { width: 24px; height: 24px; color: #22c55e; stroke-width: 1.800; }
.row-actions { display: flex; align-items: center; justify-content: flex-end; padding-right: 16px; color: #94a3b8; }
.dots { width: 16px; height: 6px; fill: #94a3b8; margin-right: 17px; }
.act { width: 24px; height: 24px; margin-left: 16px; stroke-width: 1.600; }
.act-eye { margin-left: 0; width: 26px; height: 26px; }
.card-foot { height: 37px; display: flex; align-items: center; justify-content: space-between; padding: 2px 12px 0; border-top: 1px solid #e2e8f0; }
.foot-mid { font-size: 13.500px; }

.foot { flex: none; height: 37px; background: #fff; border-top: 1px solid #e2e8f0; text-align: center; line-height: 36px; font-size: 13.600px; color: #64748b; }
.foot b { font-size: 14.300px; }
```
